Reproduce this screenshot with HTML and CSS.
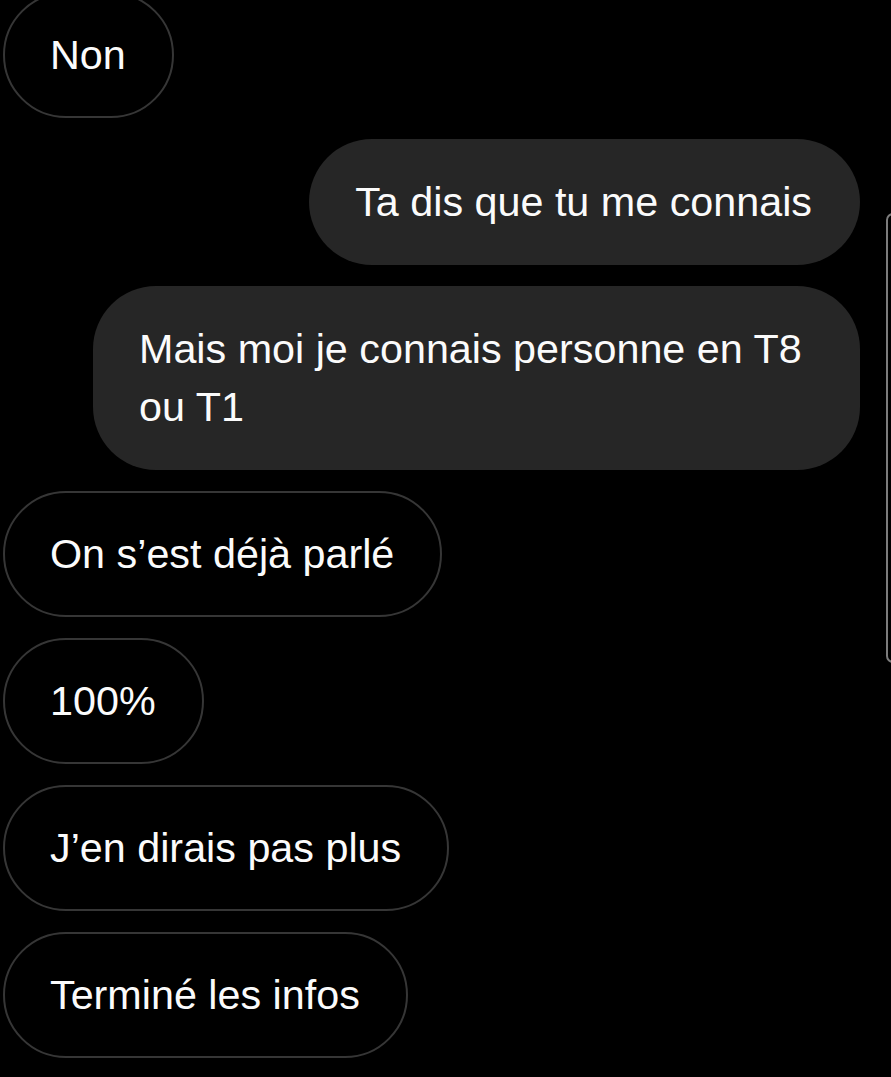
FILE: index.html
```html
<!DOCTYPE html>
<html lang="fr">
<head>
<meta charset="utf-8">
<title>Messages</title>
<link rel="stylesheet" href="styles.css">
</head>
<body>
<main class="thread">
  <div class="bubble in first">Non</div>
  <div class="bubble out">Ta dis que tu me connais</div>
  <div class="bubble out">Mais moi je connais personne en T8 ou T1</div>
  <div class="bubble in">On s’est déjà parlé</div>
  <div class="bubble in">100%</div>
  <div class="bubble in">J’en dirais pas plus</div>
  <div class="bubble in">Terminé les infos</div>
</main>
<div class="scrollbar"></div>
</body>
</html>
```
FILE: styles.css
```css
html, body {
  margin: 0;
  padding: 0;
  background: #000;
}
body {
  width: 891px;
  height: 1077px;
  overflow: hidden;
  position: relative;
  font-family: "Liberation Sans", Arial, sans-serif;
  color: #fbfbfb;
}
.thread {
  display: flex;
  flex-direction: column;
  align-items: flex-start;
  gap: 21px;
}
.bubble {
  box-sizing: border-box;
  max-width: 767px;
  font-size: 41.3px;
  line-height: 58px;
  padding: 34px 48px 34px 46px;
  border-radius: 63px;
}
.bubble.in {
  margin-left: 3px;
  border: 2px solid #363636;
  padding: 32px 46px 32px 45px;
}
.bubble.first {
  margin-top: -8px;
}
.bubble.out {
  align-self: flex-end;
  margin-right: 31px;
  background: #262626;
}
.scrollbar {
  position: absolute;
  left: 886px;
  top: 213px;
  width: 20px;
  height: 446px;
  border: 2px solid #7c7c7c;
  border-radius: 7px;
}
```
